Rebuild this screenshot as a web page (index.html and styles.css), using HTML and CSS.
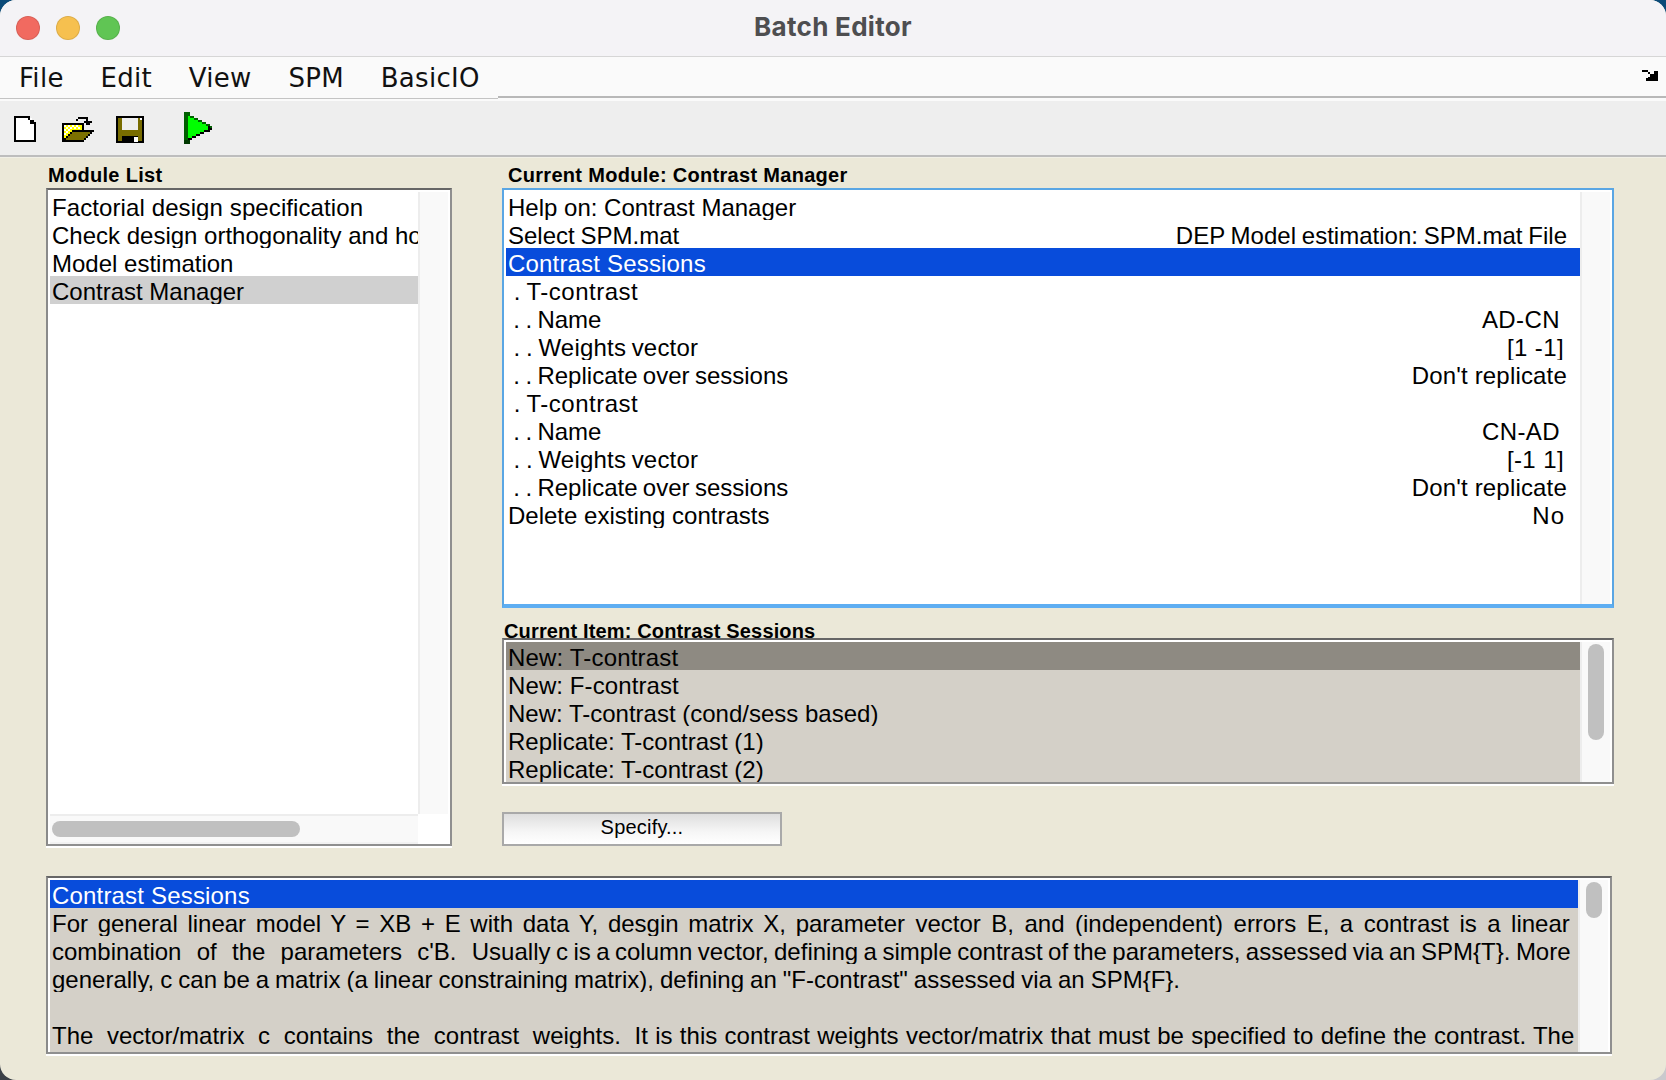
FILE: index.html
```html
<!DOCTYPE html>
<html lang="en">
<head>
<meta charset="utf-8">
<title>Batch Editor</title>
<link rel="stylesheet" href="styles.css">
</head>
<body>
<div class="window">
  <header class="titlebar">
    <div class="lights"><span class="light red"></span><span class="light amber"></span><span class="light green"></span></div>
    <div class="title">Batch Editor</div>
  </header>
  <nav class="menubar">
    <div class="menus"><span>File</span><span>Edit</span><span>View</span><span>SPM</span><span>BasicIO</span></div>
    <div class="menu-rest">
      <svg class="undock" width="16" height="12" viewBox="0 0 16 12" shape-rendering="crispEdges"><path d="M0 1h6v2h2v2h2v2h-2V5H6V3H0zM12 2h4v10H4v-3h2V8h2V7h2V5h2z" fill="#000"/></svg>
    </div>
  </nav>
  <div class="toolbar">
    <svg class="tool tool-new" width="22" height="26" viewBox="0 0 22 26" shape-rendering="crispEdges">
      <path d="M0 0h16v2h2v2h2v2h2v20H0z" fill="#000"/>
      <path d="M2 2h12v2h2v4h4v16H2z" fill="#fff"/>
      <path d="M16 2h2v2h-2z" fill="#fff"/>
    </svg>
    <svg class="tool tool-open" width="32" height="27" viewBox="0 0 32 27" shape-rendering="crispEdges">
      <path d="M14 4h2V2h10v4h4v2h-2v2h-4V8h-2V6h2V4H16v2h-2z" fill="#000"/>
      <path d="M0 8h22v7h10v2h-2v2h-2v2h-2v2h-2v2h-2v2H0z" fill="#000"/>
      <path d="M2 10h18v5H10v2H8v2H6v2H4v2H2z" fill="#ffff00"/>
      <path d="M2 10h2v2H2zM6 10h2v2H6zM10 10h2v2h-2zM14 10h2v2h-2zM4 12h2v2H4zM8 12h2v2H8zM12 12h2v2h-2zM16 12h2v2h-2zM2 14h2v2H2zM6 14h2v2H6zM4 16h2v2H4zM2 18h2v2H2z" fill="#fff"/>
      <path d="M10 17h18v2h-2v2h-2v2h-2v2H4v-2h2v-2h2v-2h2z" fill="#7c7000"/>
    </svg>
    <svg class="tool tool-save" width="28" height="27" viewBox="0 0 28 27" shape-rendering="crispEdges">
      <path d="M0 0h28v27H0z" fill="#000"/>
      <path d="M2 2h24v23H2z" fill="#786c00"/>
      <path d="M6 2h16v12H6z" fill="#eeeeee"/>
      <path d="M24 2h2v2h-2z" fill="#fff"/>
      <path d="M6 20h16v7H6z" fill="#000"/>
      <path d="M18 21h4v5h-4z" fill="#fff"/>
    </svg>
    <svg class="tool tool-run" width="28" height="32" viewBox="0 0 28 32" shape-rendering="crispEdges">
      <path d="M0 0h6v4h4v2h4v2h4v2h4v2h4v2h2v4h-2v2h-6v2h-4v2h-4v2h-4v2H6v4H0z" fill="#000"/>
      <path d="M6 4h4v2h4v2h4v2h4v2h4v2h2v2h-2v-2h-4v-2h-4v-2h-4V8h-4V6H6z" fill="#006000"/>
      <path d="M0 0h6v4H4v24H0z" fill="#006000"/>
      <path d="M0 28h6v4H0z" fill="#003800"/>
      <path d="M4 4h2v2h4v2h4v2h4v2h4v2h2v4h-4v2h-4v2h-4v2H8v2H4z" fill="#00ff00"/>
    </svg>
  </div>
  <main class="main">
    <div class="columns">
      <section class="left-col">
        <h2 class="label label-module">Module List</h2>
        <div class="panel panel-module">
          <div class="panel-grid">
            <div class="rows rows-module">
              <div class="row ls-1">Factorial design specification</div>
              <div class="row">Check design orthogonality and homogeneity</div>
              <div class="row">Model estimation</div>
              <div class="row row-grey">Contrast Manager</div>
            </div>
            <div class="vtrack"></div>
            <div class="htrack"><span class="hthumb"></span></div>
            <div class="corner"></div>
          </div>
        </div>
      </section>
      <section class="right-col">
        <h2 class="label label-current">Current Module: Contrast Manager</h2>
        <div class="panel panel-current">
          <div class="rows rows-current">
            <div class="row">Help on: Contrast Manager</div>
            <div class="row"><span class="ws-tight">Select SPM.mat</span><span class="ws-tight">DEP Model estimation: SPM.mat File</span></div>
            <div class="row row-blue ls-2">Contrast Sessions</div>
            <div class="row"><span class="tree ls-3"> . T-contrast</span></div>
            <div class="row"><span class="tree"> . . Name</span><span class="val">AD-CN </span></div>
            <div class="row"><span class="tree ls-4"> . . Weights vector</span><span class="val val-inset">[1 -1]</span></div>
            <div class="row"><span class="tree"> . . Replicate over sessions</span><span class="ls-2">Don't replicate</span></div>
            <div class="row"><span class="tree ls-3"> . T-contrast</span></div>
            <div class="row"><span class="tree"> . . Name</span><span class="val">CN-AD </span></div>
            <div class="row"><span class="tree ls-4"> . . Weights vector</span><span class="val val-inset">[-1 1]</span></div>
            <div class="row"><span class="tree"> . . Replicate over sessions</span><span class="ls-2">Don't replicate</span></div>
            <div class="row"><span>Delete existing contrasts</span><span class="val-no">No</span></div>
          </div>
          <div class="vtrack"></div>
        </div>
        <h2 class="label label-item">Current Item: Contrast Sessions</h2>
        <div class="panel panel-item">
          <div class="rows rows-item">
            <div class="row row-dark ls-2">New: T-contrast</div>
            <div class="row ls-1">New: F-contrast</div>
            <div class="row">New: T-contrast (cond/sess based)</div>
            <div class="row">Replicate: T-contrast (1)</div>
            <div class="row">Replicate: T-contrast (2)</div>
          </div>
          <div class="vtrack"><span class="vthumb vthumb-item"></span></div>
        </div>
        <button class="specify" type="button">Specify...</button>
      </section>
    </div>
    <div class="panel panel-help">
      <div class="rows rows-help">
        <div class="row row-blue ls-2">Contrast Sessions</div>
        <div class="row"><span class="ws-1">For general linear model Y = XB + E with data Y, desgin matrix X, </span><span class="ws-1b">parameter vector B, and (independent) errors E, a contrast is a linear</span></div>
        <div class="row"><span class="ws-2">combination of the parameters c'B. </span><span class="ws-2b">Usually c is a column vector, defining a simple contrast of the parameters, assessed via an SPM{T}. More</span></div>
        <div class="row"><span class="ws-4">generally, c can be a matrix (a linear constraining matrix), defining an "F-contrast" assessed via an SPM{F}.</span></div>
        <div class="row"></div>
        <div class="row"><span class="ws-3">The vector/matrix c contains the contrast weights. </span><span class="ws-3b">It is this contrast weights vector/matrix that must be specified to define the contrast. The</span></div>
      </div>
      <div class="vtrack"><span class="vthumb vthumb-help"></span></div>
    </div>
  </main>
</div>
</body>
</html>
```

FILE: styles.css
```css
* { box-sizing: border-box; }
html, body { margin: 0; padding: 0; height: 100%; overflow: hidden; }
body {
  background:
    linear-gradient(#0b4a78 0 50%, transparent 50%),
    linear-gradient(90deg, #3a3f46 0 50%, #c9c9cd 50%);
  font-family: "Liberation Sans", Arial, sans-serif;
  color: #000;
}
.window {
  width: 1666px;
  height: 1080px;
  display: flex;
  flex-direction: column;
  background: #ebe8d8;
  border-radius: 16px;
  overflow: hidden;
}

/* Title bar */
.titlebar {
  position: relative;
  height: 57px;
  flex: none;
  display: flex;
  align-items: center;
  justify-content: center;
  background: #f4f3f6;
  border-bottom: 1px solid #d6d6d6;
}
.lights {
  position: absolute;
  left: 16px;
  top: 16px;
  display: flex;
  gap: 16px;
}
.light {
  width: 24px;
  height: 24px;
  border-radius: 50%;
  border: 1px solid rgba(0, 0, 0, .1);
}
.red { background: #f16a60; }
.amber { background: #f6c04f; }
.green { background: #60c554; }
.title {
  font: 700 26px Inter, "Liberation Sans", sans-serif;
  letter-spacing: .3px;
  color: #4e4e50;
  margin-top: -3px;
}

/* Menu bar */
.menubar {
  height: 42px;
  flex: none;
  display: flex;
  background: #fafafa;
}
.menus {
  display: flex;
  gap: 36.75px;
  padding: 0 19px;
  width: 498px;
  height: 42px;
  align-items: center;
  border-bottom: 1px solid #c4c4c4;
  font: 26px "DejaVu Sans", sans-serif;
  letter-spacing: .3px;
  color: #111;
}
.menu-rest {
  flex: 1;
  height: 41px;
  display: flex;
  justify-content: flex-end;
  align-items: center;
  padding: 0 8px 4px 0;
  border-bottom: 2px solid #b8b8b8;
}

/* Toolbar */
.toolbar {
  height: 58px;
  flex: none;
  display: flex;
  align-items: flex-start;
  padding-top: 2px;
  background: #eeeeee;
  border-top: 2px solid #fafafa;
  border-bottom: 2px solid #bdbdbd;
  box-shadow: 0 1px 0 #f0efe6;
}
.tool { display: block; flex: none; }
.tool-new { margin: 13px 0 0 14px; }
.tool-open { margin: 12px 0 0 26px; }
.tool-save { margin: 13px 0 0 22px; }
.tool-run { margin: 9px 0 0 40px; }

/* Main area */
.main {
  flex: 1;
  padding: 7px 0 0 46px;
  display: flex;
  flex-direction: column;
}
.columns {
  display: grid;
  grid-template-columns: 406px 1112px;
  column-gap: 50px;
}
.left-col, .right-col { display: flex; flex-direction: column; }
.label {
  margin: 0;
  height: 24px;
  font: bold 20px/22px "Liberation Sans", Arial, sans-serif;
  letter-spacing: .3px;
  white-space: pre;
  overflow: hidden;
}
.label-module { padding-left: 2px; }
.label-current { padding-left: 6px; }
.label-item { margin-top: 14px; height: 16px; line-height: 18px; letter-spacing: .15px; padding-left: 2px; }

/* Panels */
.panel {
  display: flex;
  border: 2px solid #8f8f8f;
  border-top-color: #666;
  border-left-color: #8a8a8a;
  background: #fff;
  padding: 2px 0 0 2px;
  box-shadow: 0 2px 0 #fff;
}
.panel-module { height: 658px; }
.panel-current {
  height: 420px;
  border-color: #5aa6e4;
  border-bottom: 4px solid #5eaef2;
  box-shadow: none;
}
.panel-item { height: 146px; }
.panel-help {
  width: 1566px;
  height: 178px;
  margin-top: 30px;
}
.panel-grid {
  flex: 1;
  min-width: 0;
  display: grid;
  grid-template-columns: 368px 32px;
  grid-template-rows: 622px 30px;
}
.rows { flex: 1; min-width: 0; overflow: hidden; }
.row {
  height: 28px;
  display: flex;
  justify-content: space-between;
  padding: 0 12px 0 2px;
  font-size: 24px;
  line-height: 32px;
  white-space: pre;
  overflow: hidden;
}
.rows-module .row { padding-right: 0; }
.rows-current .row { padding-right: 13px; }
.rows-item { background: #d4d0c8; }
.rows-help { background: #d4d0c8; }
.row-grey { background: #d0d0d0; }
.row-blue { background: #084cdb; color: #fff; }
.row-dark { background: #8e8a82; }
.tree { word-spacing: -1.3px; }
.ws-tight { word-spacing: -.8px; }
.val { letter-spacing: .4px; }
.val-inset { padding-right: 3px; }
.val-no { letter-spacing: 1px; padding-right: 2px; }
.ls-1 { letter-spacing: .1px; }
.ls-2 { letter-spacing: .18px; }
.ls-3 { letter-spacing: .5px; }
.ls-4 { letter-spacing: .2px; }
.rows-help .row { display: block; padding-right: 0; }
.ws-1 { word-spacing: 3px; }
.ws-1b { word-spacing: 3.8px; }
.ws-2 { word-spacing: 8.6px; }
.ws-2b { word-spacing: -1.2px; }
.ws-3 { word-spacing: 7px; }
.ws-3b { word-spacing: .65px; }
.ws-4 { word-spacing: -.65px; }

/* Scrollbars */
.vtrack {
  flex: none;
  width: 32px;
  position: relative;
  background: #f9f9f9;
  border-left: 2px solid #ededed;
  border-right: 2px solid #fff;
}
.vthumb {
  position: absolute;
  left: 6px;
  width: 16px;
  border-radius: 8px;
  background: #c0c0c0;
}
.vthumb-item { top: 2px; height: 96px; }
.vthumb-help { top: 2px; height: 36px; }
.htrack {
  background: #f9f9f9;
  border-top: 2px solid #ededed;
  border-bottom: 2px solid #f2f2f2;
  display: flex;
  align-items: center;
  padding-left: 2px;
}
.hthumb {
  width: 248px;
  height: 16px;
  border-radius: 8px;
  background: #c0c0c0;
}
.corner { background: #fff; }

/* Button */
.specify {
  width: 280px;
  height: 34px;
  margin-top: 28px;
  padding: 0 0 4px;
  border: 2px solid #a9a9a9;
  border-radius: 0;
  background: linear-gradient(180deg, #dedede 0%, #f6f6f6 60%, #ffffff 100%);
  font: 20px "Liberation Sans", Arial, sans-serif;
  letter-spacing: .2px;
  color: #000;
}
```
